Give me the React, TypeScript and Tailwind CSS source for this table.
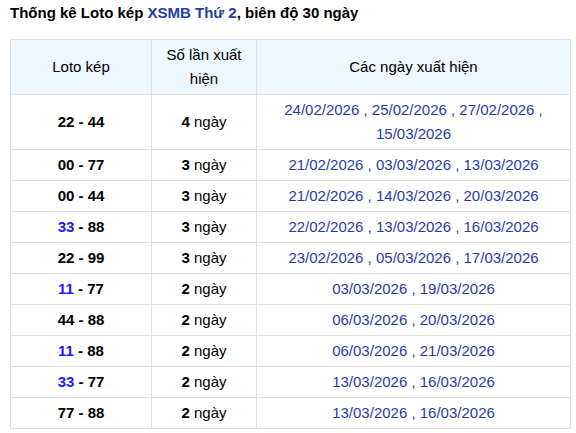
const rows: { a: string; b: string; blueA?: boolean; n: number; dates: string[] }[] = [
  { a: '22', b: '44', n: 4, dates: ['24/02/2026', '25/02/2026', '27/02/2026', '15/03/2026'] },
  { a: '00', b: '77', n: 3, dates: ['21/02/2026', '03/03/2026', '13/03/2026'] },
  { a: '00', b: '44', n: 3, dates: ['21/02/2026', '14/03/2026', '20/03/2026'] },
  { a: '33', b: '88', blueA: true, n: 3, dates: ['22/02/2026', '13/03/2026', '16/03/2026'] },
  { a: '22', b: '99', n: 3, dates: ['23/02/2026', '05/03/2026', '17/03/2026'] },
  { a: '11', b: '77', blueA: true, n: 2, dates: ['03/03/2026', '19/03/2026'] },
  { a: '44', b: '88', n: 2, dates: ['06/03/2026', '20/03/2026'] },
  { a: '11', b: '88', blueA: true, n: 2, dates: ['06/03/2026', '21/03/2026'] },
  { a: '33', b: '77', blueA: true, n: 2, dates: ['13/03/2026', '16/03/2026'] },
  { a: '77', b: '88', n: 2, dates: ['13/03/2026', '16/03/2026'] },
];

export default function App() {
  return (
    <div className="min-h-[433px] bg-white px-[10px] pt-[1px] text-[15px] text-black" style={{ fontFamily: '"Liberation Sans", Arial, sans-serif' }}>
      <h2 className="mb-[14px] text-[15px] font-bold leading-6">
        Thống kê Loto kép <span className="text-[#1f3ea8]">XSMB Thứ 2</span>, biên độ 30 ngày
      </h2>
      <table className="w-[561px] table-fixed border-collapse text-center leading-6">
        <colgroup>
          <col className="w-[141px]" />
          <col className="w-[105px]" />
          <col />
        </colgroup>
        <thead>
          <tr className="bg-[#eef6fe]">
            <th className="border border-[#dde1e6] px-2 py-[3px] font-normal">Loto kép</th>
            <th className="border border-[#dde1e6] px-2 py-[3px] font-normal">Số lần xuất hiện</th>
            <th className="border border-[#dde1e6] px-2 py-[3px] font-normal">Các ngày xuất hiện</th>
          </tr>
        </thead>
        <tbody>
          {rows.map((r, i) => (
            <tr key={i}>
              <td className="border border-[#dde1e6] px-2 py-[3px] font-bold">
                <span className={r.blueA ? 'text-[#1a1aff]' : ''}>{r.a}</span> - {r.b}
              </td>
              <td className="border border-[#dde1e6] px-2 py-[3px]">
                <b>{r.n}</b> ngày
              </td>
              <td className="border border-[#dde1e6] px-2 py-[3px] text-[#1f3ea8]">
                {r.dates.join(' , ')}
              </td>
            </tr>
          ))}
        </tbody>
      </table>
    </div>
  );
}
